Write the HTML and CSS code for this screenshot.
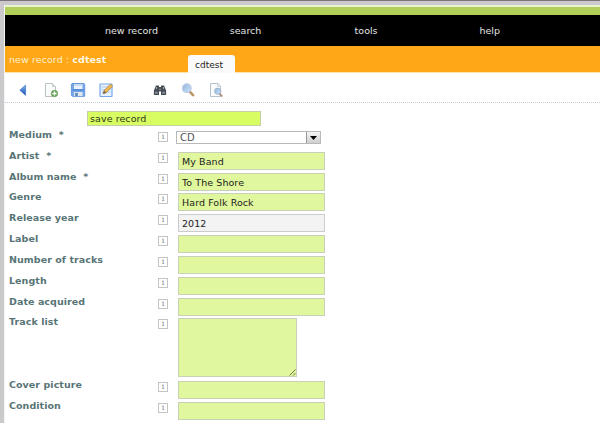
FILE: index.html
```html
<!DOCTYPE html>
<html lang="en">
<head>
<meta charset="utf-8">
<title>new record : cdtest</title>
<link rel="stylesheet" href="styles.css">
</head>
<body>
<div class="page">
  <div class="strip"></div>
  <nav class="menu"><a class="m1">new record</a><a class="m2">search</a><a class="m3">tools</a><a class="m4">help</a></nav>
  <header class="title"><span class="crumb">new record : <b>cdtest</b></span><span class="tab">cdtest</span></header>
  <div class="toolbar">
    <svg class="back" width="16" height="16" viewBox="0 0 16 16"><defs><linearGradient id="bl" x2="0" y2="1"><stop offset="0" stop-color="#7db4ec"/><stop offset="1" stop-color="#1a50b4"/></linearGradient><linearGradient id="gl" x2="1" y2="1"><stop offset="0" stop-color="#8db4dc"/><stop offset="1" stop-color="#cfe5fa"/></linearGradient></defs><path d="M10.6 3v10.4L4.8 8.2z" fill="url(#bl)" stroke="#4279cb" stroke-width=".7"/></svg>
    <svg class="new" width="16" height="16" viewBox="0 0 16 16"><path d="M2.5 1.5h7l3 3v10h-10z" fill="#fbfcfc" stroke="#b9c0c0"/><path d="M9.5 1.5v3h3" fill="#e3e8e8" stroke="#b9c0c0" stroke-width=".7"/><circle cx="11.5" cy="11.5" r="3.3" fill="#62a451" stroke="#7d9d70" stroke-width=".6"/><path d="M11.5 9.4v4.2M9.4 11.5h4.2" stroke="#fff" stroke-width="1.3"/></svg>
    <svg class="save" width="16" height="16" viewBox="0 0 16 16"><path d="M2 1.5h12l.7.8v12H2.4l-1-1v-11z" fill="#76a8e8" stroke="#6795da"/><path d="M4 2h8.5v5H4z" fill="#e9f3fd"/><path d="M4 3h8.5" stroke="#acc3df"/><path d="M2.4 8h11.4" stroke="#4a81d2" stroke-width="1.3"/><path d="M4 10h8.5v4H4z" fill="#dfe9ed"/><path d="M5.2 10.8h2.6V14H5.2z" fill="#5b88b9"/></svg>
    <svg class="edit" width="16" height="16" viewBox="0 0 16 16"><rect x="2" y="2" width="12" height="12.5" rx=".6" fill="#e6f1fc" stroke="#76a7ec" stroke-width="1.2"/><path d="M3.5 5h9M3.5 7.5h9M3.5 10h9" stroke="#a9c8ee" stroke-width=".8"/><path d="M5 11.8l1-3.3 6.5-6.4 2.2 2.1-6.5 6.6z" fill="#eeb64d" stroke="#a98450" stroke-width=".7"/><path d="M5 11.8l1-3.3 2.2 2.3z" fill="#6b6557"/></svg>
    <svg class="find" width="16" height="16" viewBox="0 0 16 16"><path d="M4 3.5h3v1.4h2V3.5h3l2.1 5v4.6H9V9.5H7v3.6H1.9V8.5z" fill="#474d54"/><path d="M4.4 5v2M11.6 5v2M7.2 7.3h1.6" stroke="#a0a8b0" stroke-width="1.1"/><path d="M3 9.7h2.8v2H3zM10.2 9.7H13v2h-2.8z" fill="#818b96"/></svg>
    <svg class="zoom" width="16" height="16" viewBox="0 0 16 16"><path d="M9.5 9.4l3.6 3.8" stroke="#bd9566" stroke-width="2.6" stroke-linecap="round"/><circle cx="6.8" cy="6.2" r="4.3" fill="url(#gl)" stroke="#b7c8e0" stroke-width="1.2"/></svg>
    <svg class="preview" width="16" height="16" viewBox="0 0 16 16"><path d="M2.5 1.5h7.4l2.7 2.7v10.3H2.5z" fill="#fbfcfd" stroke="#b6c3ce"/><path d="M9.8 1.5v2.8h2.8" fill="none" stroke="#b6c3ce" stroke-width=".7"/><path d="M11.1 11.4l2.5 2.5" stroke="#aa8c75" stroke-width="2" stroke-linecap="round"/><circle cx="9.7" cy="9.2" r="3.1" fill="url(#gl)" stroke="#a3b6cd"/></svg>
  </div>
  <main>
    <button class="submit">save record</button>
    <div class="row"><label>Medium&nbsp; *</label><i class="info">i</i><div class="select"><span>CD</span><span class="drop"><svg width="7" height="4" viewBox="0 0 7 4"><path d="M0 0h7L3.5 4z"/></svg></span></div></div>
    <div class="row"><label>Artist&nbsp; *</label><i class="info">i</i><div class="field">My Band</div></div>
    <div class="row"><label>Album name&nbsp; *</label><i class="info">i</i><div class="field">To The Shore</div></div>
    <div class="row"><label>Genre</label><i class="info">i</i><div class="field">Hard Folk Rock</div></div>
    <div class="row"><label>Release year</label><i class="info">i</i><div class="field plain">2012</div></div>
    <div class="row"><label>Label</label><i class="info">i</i><div class="field"></div></div>
    <div class="row"><label>Number of tracks</label><i class="info">i</i><div class="field"></div></div>
    <div class="row"><label>Length</label><i class="info">i</i><div class="field"></div></div>
    <div class="row"><label>Date acquired</label><i class="info">i</i><div class="field"></div></div>
    <div class="row tall"><label>Track list</label><i class="info">i</i><div class="field area"><svg width="7" height="7" viewBox="0 0 7 7"><path d="M.5 6.5l6-6M4 6.5L6.5 4" stroke="#6c7550" fill="none"/></svg></div></div>
    <div class="row"><label>Cover picture</label><i class="info">i</i><div class="field"></div></div>
    <div class="row"><label>Condition</label><i class="info">i</i><div class="field"></div></div>
  </main>
</div>
</body>
</html>
```
FILE: styles.css
```css
* { box-sizing: border-box; }
body {
  margin: 0;
  height: 423px;
  overflow: hidden;
  background: #cbc9cc;
  border-top: 1px solid #7b7579;
  padding: 4px 0 0 4px;
  font: 9.5px/12px "DejaVu Sans", Verdana, sans-serif;
  color: #222;
}
.page { height: 418px; background: #fff; border-left: 1px solid #f4f4f4; }
.strip { height: 10px; background: #b0ce58; border-top: 2px solid #e9f3ce; }
.menu { height: 31px; background: #000; color: #e4e4e4; display: flex; align-items: center; padding-left: 100px; }
.menu a { width: 124.8px; flex: none; }
.title { height: 27px; background: #ffa716; border-bottom: 1px solid #ffe3ae; display: flex; color: #fff0ce; }
.crumb { width: 183px; padding: 8px 0 0 4px; white-space: nowrap; letter-spacing: .08px; }
.crumb b { color: #fff8e4; }
.tab { width: 47px; height: 18px; margin-top: 9px; padding: 4px 0 0 7px; background: #fafafa; border-radius: 3px 3px 0 0; color: #222; font-size: 9px; }
.toolbar { height: 30px; border-bottom: 1px dotted #c3c7d2; display: flex; align-items: center; padding: 4px 0 0 10px; }
.toolbar svg { flex: none; }
.new { margin-left: 12px; }
.save { margin-left: 11px; }
.edit { margin-left: 12px; }
.find { margin-left: 38px; }
.zoom { margin-left: 12px; }
.preview { margin-left: 12px; }
main { padding: 8px 0 0 4px; }
.submit { display: block; width: 174px; height: 15px; margin: 0 0 3px 78px; padding: 0 0 0 2px; border: 1px solid #c4cfa5; background: #d7fd63; color: #30341c; text-align: left; font: 9.5px/13px "DejaVu Sans", Verdana, sans-serif; letter-spacing: .08px; }
.row { height: 20.84px; display: flex; align-items: flex-start; }
.row.tall { height: 62.5px; }
label { width: 149px; font-weight: bold; letter-spacing: .06px; color: #587576; white-space: nowrap; }
.info { width: 10px; height: 10px; margin-top: 3px; border: 1px solid #c4c4c4; font: 8px/8px "DejaVu Serif", serif; color: #8a8a8a; text-align: center; }
.field { width: 147px; height: 18px; margin: 2px 0 0 10px; padding-left: 3px; border: 1px solid #c9d0ba; background: #e1f79d; line-height: 17px; letter-spacing: .08px; }
.plain { background: #f3f3f3; border-color: #ccc; }
.area { width: 119px; height: 59px; display: flex; align-items: flex-end; justify-content: flex-end; }
.select { width: 145px; height: 13px; margin: 2px 0 0 8px; border: 1px solid #b9b9b9; display: flex; justify-content: space-between; padding-left: 3px; font-size: 10px; line-height: 12px; color: #555; }
.drop { width: 14px; border-left: 1px solid #999; background: linear-gradient(#f5f5f5, #cfcfcf); display: flex; align-items: center; justify-content: center; }
```
